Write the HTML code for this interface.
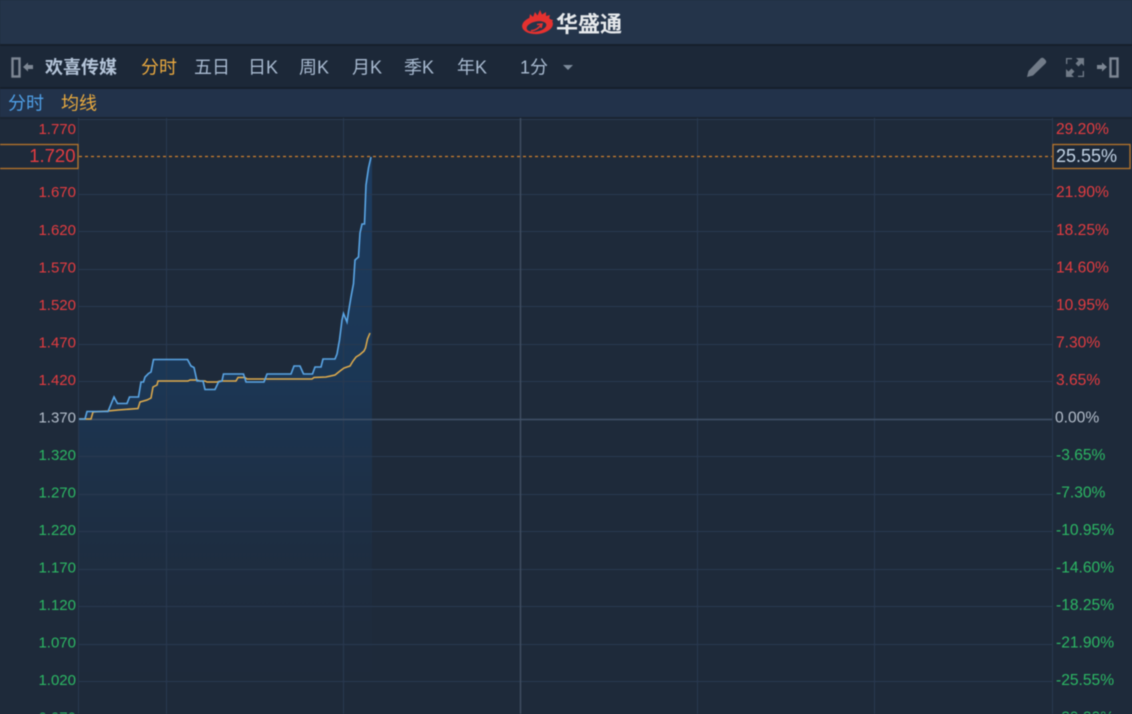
<!DOCTYPE html>
<html><head><meta charset="utf-8">
<style>
html,body{margin:0;padding:0;width:1132px;height:714px;overflow:hidden;background:#1e2a3a}
svg{display:block;filter:blur(.4px)}
text{font-family:"Liberation Sans","Noto Sans CJK SC",sans-serif}
</style></head><body>
<svg width="1132" height="714" viewBox="0 0 1132 714" xmlns="http://www.w3.org/2000/svg">
<defs>
<linearGradient id="a" x1="0" y1="156" x2="0" y2="714" gradientUnits="userSpaceOnUse">
<stop offset="0" stop-color="#1d3d62" stop-opacity=".9"/>
<stop offset=".4" stop-color="#1b3a5c" stop-opacity=".8"/>
<stop offset=".62" stop-color="#1d3551" stop-opacity=".5"/>
<stop offset=".88" stop-color="#1e2f45" stop-opacity=".15"/>
<stop offset="1" stop-color="#1e2b3e" stop-opacity="0"/>
</linearGradient>
</defs>
<rect width="1132" height="714" fill="#1e2a3a"/>
<rect width="1132" height="44" fill="#24344a"/>
<rect y="44" width="1132" height="2" fill="#161f2c"/>
<rect y="46" width="1132" height="41" fill="#1c2838"/>
<rect y="87" width="1132" height="2" fill="#161f2c"/>
<rect y="89" width="1132" height="28" fill="#22324a"/>
<rect y="117" width="1132" height="2" fill="#1a2431"/>

<!-- logo -->
<g fill="#e5312f">
<path d="M529 20L530 14L533 17L535 12L537.500 15.500L540 10L542 14.500L546 12L546 16L550 15L549 19L553 20L551 24L544 24L534 24Z"/>
<ellipse cx="537.500" cy="25" rx="15.500" ry="9" transform="rotate(-6 537.500 25)"/>
</g>
<ellipse cx="536.500" cy="26.500" rx="10" ry="5" transform="rotate(-12 536.500 26.500)" fill="#24344a"/>
<path d="M531 30.500C534 31 539 28.500 541 24.500M537 24.500L542 24L541 28" fill="none" stroke="#e5312f" stroke-width="1.500"/>
<text x="556" y="32" font-size="22" font-weight="700" fill="#e6e9ec">华盛通</text>

<!-- toolbar -->
<rect x="12.500" y="58.500" width="7" height="18" fill="none" stroke="#7d8794" stroke-width="2.400"/>
<path d="M23 67l5-4.500v2.500h5v4h-5v2.500z" fill="#7d8794"/>
<text x="45" y="73.500" font-size="18" font-weight="700" fill="#b4c4d8">欢喜传媒</text>
<text x="141" y="73.500" font-size="18" fill="#eaa93f">分时</text>
<g font-size="18" fill="#a8bad0">
<text x="194" y="73.500">五日</text>
<text x="248" y="73.500">日K</text>
<text x="299" y="73.500">周K</text>
<text x="352" y="73.500">月K</text>
<text x="404" y="73.500">季K</text>
<text x="457" y="73.500">年K</text>
<text x="520" y="73.500">1分</text>
</g>
<path d="M563 65h10l-5 5z" fill="#7d8b9b"/>
<path d="M1027 77l1.500-6 12-12.500c1-1 2.500-1 3.500 0l1.500 1.500c1 1 1 2.500 0 3.500l-12.500 12z" fill="#717b88"/>
<g fill="#717b88">
<path d="M1076 58h8v8l-2.500-2.500-3 3-3-3 3-3z"/>
<path d="M1074 77h-8v-8l2.500 2.500 3-3 3 3-3 3z"/>
<path d="M1066 64v-6h6v1.300h-4.700v4.700zM1084 71v6h-6v-1.300h4.700v-4.700z"/>
</g>
<path d="M1097 65h5v-2.500l5 4.500-5 4.500v-2.500h-5z" fill="#7d8794"/>
<rect x="1110.500" y="58.500" width="7" height="18" fill="none" stroke="#7d8794" stroke-width="2.400"/>

<!-- legend -->
<text x="8" y="109.500" font-size="18" fill="#4f9fe6">分时</text>
<text x="61" y="109.500" font-size="18" fill="#eaab3f">均线</text>

<!-- area -->
<path fill="url(#a)" d="M79 419H85L87 411.500H108L114 397L117.500 403.500H127L129.500 397H138.500L141 382H143.500L145 377L148.500 373.500L151 372L153.500 359.500H187.500L191 366L194 367.500L197 381H203L205 389.500H215L218.500 382L222 381L223.500 374H243.500L246 382H264L267 374H291L294 366H300L303.500 374H312.500L315 367H321L323 359H335L337 354L339.500 340L342 320L343.500 313.500L347 322L348.500 312L351 297L353.500 283.500L355 260L358.500 257L360 233L362 224H364.500L366 185L368.500 168L371 157.500H372V714H79Z"/>

<!-- grid -->
<g stroke="#293950" stroke-width="1" fill="none">
<path d="M79 119.500H1052M79 194.500H1052M79 231.500H1052M79 269.500H1052M79 306.500H1052M79 344.500H1052M79 381.500H1052M79 456.500H1052M79 494.500H1052M79 531.500H1052M79 569.500H1052M79 606.500H1052M79 644.500H1052M79 681.500H1052"/>
<path d="M78.500 118V714M166.500 118V714M343.500 118V714M697.500 118V714M874.500 118V714M1052.500 118V714"/>
</g>
<path d="M520.500 118V714" stroke="#414f63" stroke-width="1.400"/>
<path d="M79 419.500H1052" stroke="#3f5067" stroke-width="1.400"/>

<!-- price lines -->
<polyline fill="none" stroke="#e0ac4d" stroke-width="1.500" points="79,419 91,419 93,412 108,411 118,410 138,408.500 140,402 147,400 151,398 153,387 157,385 158,381 188,381 190,380 197,380 200,381 205,381 207,382 217,382 220,381 236,381 238,377.500 245,377.500 247,379 312,379 314,377.500 326,377 335,375 340,371 344,368 350,366 353,361 356,357 360,354.500 364,351 365.500,348 367.500,339 370,333"/>
<polyline fill="none" stroke="#5aa6e6" stroke-width="1.600" points="79,419 85,419 87,411.500 108,411.500 114,397 117.500,403.500 127,403.500 129.500,397 138.500,397 141,382 143.500,382 145,377 148.500,373.500 151,372 153.500,359.500 187.500,359.500 191,366 194,367.500 197,381 203,381 205,389.500 215,389.500 218.500,382 222,381 223.500,374 243.500,374 246,382 264,382 267,374 291,374 294,366 300,366 303.500,374 312.500,374 315,367 321,367 323,359 335,359 337,354 339.500,340 342,320 343.500,313.500 347,322 348.500,312 351,297 353.500,283.500 355,260 358.500,257 360,233 362,224 364.500,224 366,185 368.500,168 371,157"/>

<!-- crosshair -->
<path d="M79 156.500H1052" stroke="#d0812f" stroke-width="1.300" stroke-dasharray="3 3"/>
<rect x="-2" y="144.500" width="80" height="24" fill="#1e2a3a" stroke="#b8752b" stroke-width="1.300"/>
<rect x="1053" y="144.500" width="77" height="24" fill="#1c2838" stroke="#b8752b" stroke-width="1.300"/>

<!-- left labels -->
<g font-size="15" text-anchor="end" fill="#e43c40">
<text x="76" y="134">1.770</text>
<text x="76" y="197">1.670</text>
<text x="76" y="235">1.620</text>
<text x="76" y="272.500">1.570</text>
<text x="76" y="310">1.520</text>
<text x="76" y="347.500">1.470</text>
<text x="76" y="385">1.420</text>
</g>
<text x="75.500" y="162" font-size="18.500" text-anchor="end" fill="#e43c40">1.720</text>
<text x="76" y="422.500" font-size="15" text-anchor="end" fill="#b4becb">1.370</text>
<g font-size="15" text-anchor="end" fill="#2cb864">
<text x="76" y="460">1.320</text>
<text x="76" y="497.500">1.270</text>
<text x="76" y="535">1.220</text>
<text x="76" y="572.500">1.170</text>
<text x="76" y="610">1.120</text>
<text x="76" y="647.500">1.070</text>
<text x="76" y="685">1.020</text>
<text x="76" y="722.500">0.970</text>
</g>

<!-- right labels -->
<g font-size="15.600" fill="#e43c40">
<text x="1056" y="134">29.20%</text>
<text x="1056" y="197">21.90%</text>
<text x="1056" y="235">18.25%</text>
<text x="1056" y="272.500">14.60%</text>
<text x="1056" y="310">10.95%</text>
<text x="1056" y="347.500">7.30%</text>
<text x="1056" y="385">3.65%</text>
</g>
<text x="1056" y="162" font-size="18" fill="#c3d4e6">25.55%</text>
<text x="1055" y="422.500" font-size="15.600" fill="#b4becb">0.00%</text>
<g font-size="15.600" fill="#2cb864">
<text x="1056" y="460">-3.65%</text>
<text x="1056" y="497.500">-7.30%</text>
<text x="1056" y="535">-10.95%</text>
<text x="1056" y="572.500">-14.60%</text>
<text x="1056" y="610">-18.25%</text>
<text x="1056" y="647.500">-21.90%</text>
<text x="1056" y="685">-25.55%</text>
<text x="1056" y="722.500">-29.20%</text>
</g>
</svg>
</body></html>
